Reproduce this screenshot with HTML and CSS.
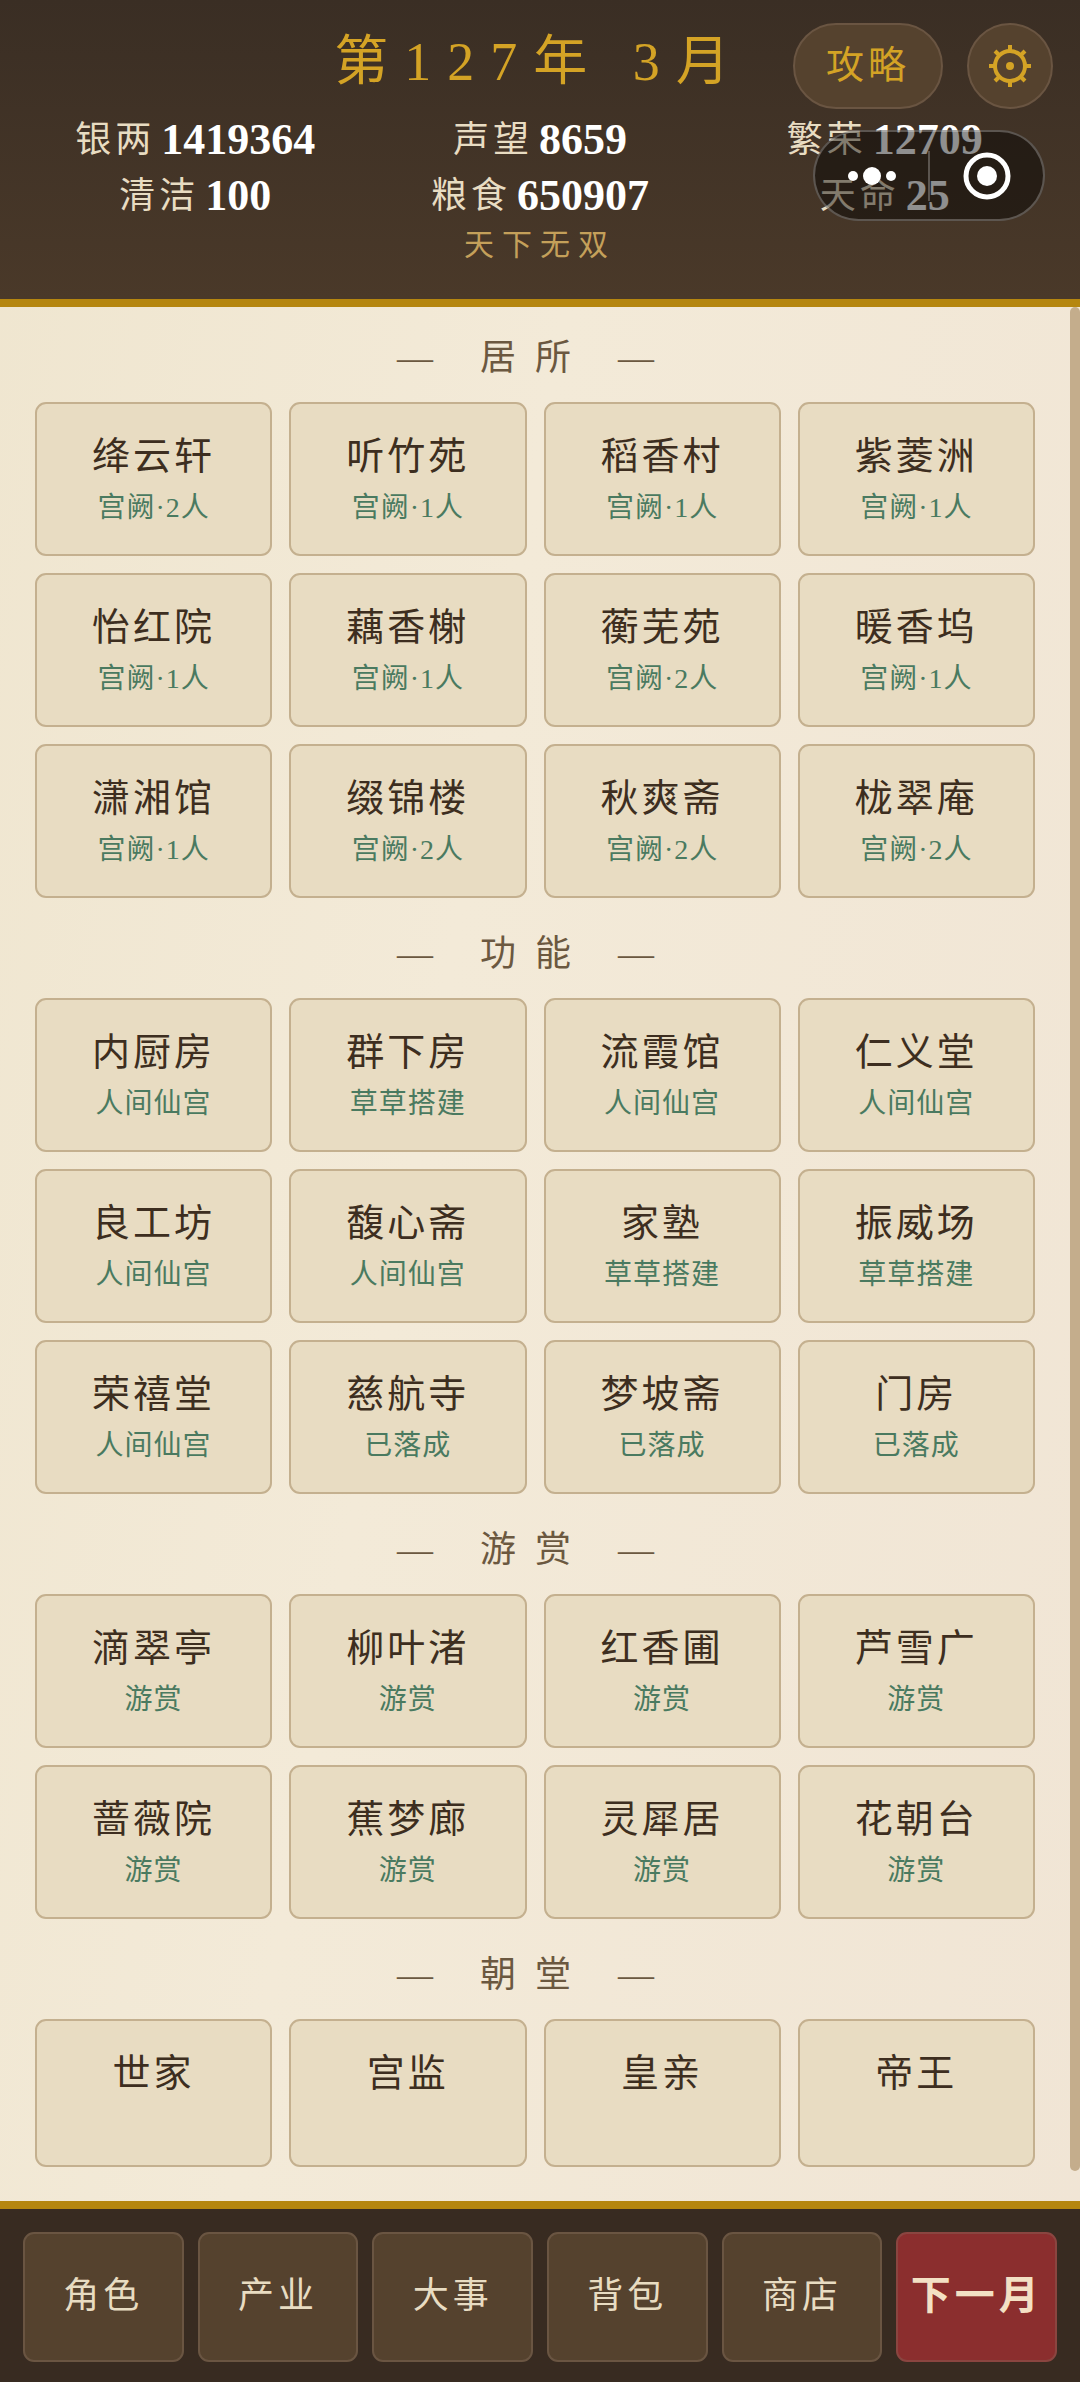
FILE: index.html
```
<!DOCTYPE html>
<html lang="zh-CN">
<head>
    <meta charset="UTF-8">
    <meta name="viewport" content="width=device-width, initial-scale=1.0">
    <title>第127年 3月</title>
    <link rel="stylesheet" href="styles.css">
</head>
<body>
    <!-- Header -->
    <header class="header">
        <div class="header-top">
            <h1 class="date">第127年 3月</h1>
            <div class="header-actions">
                <button class="btn-guide" type="button">攻略</button>
                <button class="btn-settings" type="button" aria-label="设置">
                    <svg width="42" height="42" viewBox="0 0 42 42" fill="none" stroke="currentColor" stroke-width="4">
                        <circle cx="21" cy="21" r="15"/>
                        <circle cx="21" cy="21" r="4" fill="currentColor" stroke="none"/>
                        <path d="M21 0v5M21 37v5M0 21h5M37 21h5M6 6l4 4M32 32l4 4M6 36l4-4M32 10l4-4"/>
                    </svg>
                </button>
            </div>
        </div>
        <div class="stats">
            <div class="stat">银两<strong>1419364</strong></div>
            <div class="stat">声望<strong>8659</strong></div>
            <div class="stat">繁荣<strong>12709</strong></div>
            <div class="stat">清洁<strong>100</strong></div>
            <div class="stat">粮食<strong>650907</strong></div>
            <div class="stat">天命<strong>25</strong></div>
        </div>
        <p class="rank">天下无双</p>

        <!-- Mini program menu, floats over the stats -->
        <div class="capsule">
            <button type="button" aria-label="更多">
                <svg width="50" height="50" viewBox="0 0 50 50" fill="currentColor">
                    <circle cx="6" cy="25" r="5"/>
                    <circle cx="25" cy="25" r="9"/>
                    <circle cx="44" cy="25" r="5"/>
                </svg>
            </button>
            <button type="button" aria-label="关闭">
                <svg width="50" height="50" viewBox="0 0 50 50">
                    <circle cx="25" cy="25" r="21" fill="none" stroke="currentColor" stroke-width="5"/>
                    <circle cx="25" cy="25" r="10" fill="currentColor"/>
                </svg>
            </button>
        </div>
    </header>

    <!-- Buildings -->
    <main class="main">
        <div class="content">
            <section class="section">
                <h2>— 居所 —</h2>
                <div class="grid">
                    <button class="card" type="button"><span class="name">绛云轩</span><span class="info">宫阙·2人</span></button>
                    <button class="card" type="button"><span class="name">听竹苑</span><span class="info">宫阙·1人</span></button>
                    <button class="card" type="button"><span class="name">稻香村</span><span class="info">宫阙·1人</span></button>
                    <button class="card" type="button"><span class="name">紫菱洲</span><span class="info">宫阙·1人</span></button>
                    <button class="card" type="button"><span class="name">怡红院</span><span class="info">宫阙·1人</span></button>
                    <button class="card" type="button"><span class="name">藕香榭</span><span class="info">宫阙·1人</span></button>
                    <button class="card" type="button"><span class="name">蘅芜苑</span><span class="info">宫阙·2人</span></button>
                    <button class="card" type="button"><span class="name">暖香坞</span><span class="info">宫阙·1人</span></button>
                    <button class="card" type="button"><span class="name">潇湘馆</span><span class="info">宫阙·1人</span></button>
                    <button class="card" type="button"><span class="name">缀锦楼</span><span class="info">宫阙·2人</span></button>
                    <button class="card" type="button"><span class="name">秋爽斋</span><span class="info">宫阙·2人</span></button>
                    <button class="card" type="button"><span class="name">栊翠庵</span><span class="info">宫阙·2人</span></button>
                </div>
            </section>

            <section class="section">
                <h2>— 功能 —</h2>
                <div class="grid">
                    <button class="card" type="button"><span class="name">内厨房</span><span class="info">人间仙宫</span></button>
                    <button class="card" type="button"><span class="name">群下房</span><span class="info">草草搭建</span></button>
                    <button class="card" type="button"><span class="name">流霞馆</span><span class="info">人间仙宫</span></button>
                    <button class="card" type="button"><span class="name">仁义堂</span><span class="info">人间仙宫</span></button>
                    <button class="card" type="button"><span class="name">良工坊</span><span class="info">人间仙宫</span></button>
                    <button class="card" type="button"><span class="name">馥心斋</span><span class="info">人间仙宫</span></button>
                    <button class="card" type="button"><span class="name">家塾</span><span class="info">草草搭建</span></button>
                    <button class="card" type="button"><span class="name">振威场</span><span class="info">草草搭建</span></button>
                    <button class="card" type="button"><span class="name">荣禧堂</span><span class="info">人间仙宫</span></button>
                    <button class="card" type="button"><span class="name">慈航寺</span><span class="info">已落成</span></button>
                    <button class="card" type="button"><span class="name">梦坡斋</span><span class="info">已落成</span></button>
                    <button class="card" type="button"><span class="name">门房</span><span class="info">已落成</span></button>
                </div>
            </section>

            <section class="section">
                <h2>— 游赏 —</h2>
                <div class="grid">
                    <button class="card" type="button"><span class="name">滴翠亭</span><span class="info">游赏</span></button>
                    <button class="card" type="button"><span class="name">柳叶渚</span><span class="info">游赏</span></button>
                    <button class="card" type="button"><span class="name">红香圃</span><span class="info">游赏</span></button>
                    <button class="card" type="button"><span class="name">芦雪广</span><span class="info">游赏</span></button>
                    <button class="card" type="button"><span class="name">蔷薇院</span><span class="info">游赏</span></button>
                    <button class="card" type="button"><span class="name">蕉梦廊</span><span class="info">游赏</span></button>
                    <button class="card" type="button"><span class="name">灵犀居</span><span class="info">游赏</span></button>
                    <button class="card" type="button"><span class="name">花朝台</span><span class="info">游赏</span></button>
                </div>
            </section>

            <section class="section">
                <h2>— 朝堂 —</h2>
                <div class="grid">
                    <button class="card" type="button"><span class="name">世家</span></button>
                    <button class="card" type="button"><span class="name">宫监</span></button>
                    <button class="card" type="button"><span class="name">皇亲</span></button>
                    <button class="card" type="button"><span class="name">帝王</span></button>
                </div>
            </section>
        </div>
        <div class="scroll-track"><div class="scroll-thumb"></div></div>
    </main>

    <!-- Bottom bar -->
    <nav class="footer">
        <button type="button">角色</button>
        <button type="button">产业</button>
        <button type="button">大事</button>
        <button type="button">背包</button>
        <button type="button">商店</button>
        <button class="next-month" type="button">下一月</button>
    </nav>
</body>
</html>
```
FILE: styles.css
```
* {
    box-sizing: border-box;
}
body {
    margin: 0;
    min-height: 100vh;
    display: flex;
    flex-direction: column;
    font-family: "Liberation Serif", "Noto Sans CJK SC", serif;
    background-color: #f3ead8;
    color: #3d2e20;
}
button {
    margin: 0;
    padding: 0;
    font-family: inherit;
    color: inherit;
    cursor: pointer;
}
svg {
    display: block;
}

/* Header */
.header {
    position: relative;
    padding: 23px 23px 33px;
    background: linear-gradient(#3a2e24, #4a3929);
    border-bottom: 8px solid #b5860f;
}
.header-top {
    display: grid;
    grid-template-columns: 1fr auto 1fr;
    height: 86px;
}
.date {
    grid-column: 2;
    margin: 0;
    font-size: 54px;
    font-weight: normal;
    line-height: 78px;
    letter-spacing: 16px;
    color: #d4a325;
}
.header-actions {
    display: flex;
    justify-content: flex-end;
    gap: 24px;
    padding-right: 4px;
}
.header-actions button {
    height: 86px;
    border: 2px solid #6a5542;
    border-radius: 43px;
    background-color: #55422e;
    color: #d4a325;
}
.header-actions .btn-guide {
    width: 150px;
    padding-bottom: 10px;
    font-size: 38px;
    letter-spacing: 4px;
}
.header-actions .btn-settings {
    display: flex;
    align-items: center;
    justify-content: center;
    width: 86px;
}
.stats {
    display: grid;
    grid-template-columns: repeat(3, 1fr);
    margin-top: 3px;
}
.stat {
    display: flex;
    align-items: center;
    justify-content: center;
    gap: 6px;
    font-size: 36px;
    line-height: 56px;
    letter-spacing: 4px;
    color: #e8dcc2;
}
.stat strong {
    font-size: 44px;
    letter-spacing: 0;
    color: #fff;
}
.rank {
    margin: 0;
    font-size: 30px;
    line-height: 42px;
    letter-spacing: 8px;
    text-align: center;
    color: #c4a05a;
}
.capsule {
    position: absolute;
    top: 130px;
    right: 35px;
    display: flex;
    align-items: center;
    width: 232px;
    height: 91px;
    border: 2px solid rgba(255, 255, 255, 0.25);
    border-radius: 46px;
    background-color: rgba(0, 0, 0, 0.44);
}
.capsule button {
    flex: 1;
    display: flex;
    align-items: center;
    justify-content: center;
    height: 50px;
    border: none;
    background: none;
    color: #fff;
}
.capsule button + button {
    border-left: 2px solid rgba(255, 255, 255, 0.25);
}

/* Buildings */
.main {
    flex: 1;
    display: flex;
    background: linear-gradient(100deg, rgba(236, 226, 200, 0.5), rgba(245, 237, 220, 0) 40%, rgba(238, 224, 210, 0.5));
}
.content {
    flex: 1;
    padding: 23px 35px 34px;
}
.section + .section {
    margin-top: 28px;
}
.section h2 {
    margin: 0 0 16px;
    font-size: 36px;
    font-weight: normal;
    line-height: 56px;
    letter-spacing: 19px;
    text-align: center;
    color: #6b5840;
}
.grid {
    display: grid;
    grid-template-columns: repeat(4, 1fr);
    gap: 17px;
}
.card {
    display: flex;
    flex-direction: column;
    align-items: center;
    gap: 4px;
    min-height: 148px;
    padding: 26px 0 24px;
    border: 2px solid #c4b08f;
    border-radius: 11px;
    background-color: #e8dcc2;
}
.name {
    font-size: 38px;
    line-height: 52px;
    letter-spacing: 3px;
}
.info {
    font-size: 28px;
    line-height: 44px;
    letter-spacing: 1px;
    color: #4a7a60;
}
.scroll-track {
    width: 10px;
    padding-bottom: 30px;
}
.scroll-thumb {
    height: 100%;
    border-radius: 5px;
    background-color: #c4ad8c;
}

/* Bottom bar */
.footer {
    display: grid;
    grid-template-columns: repeat(6, 1fr);
    gap: 14px;
    padding: 23px 23px 20px;
    background-color: #382b21;
    border-top: 8px solid #b5860f;
}
.footer button {
    height: 130px;
    padding-bottom: 10px;
    border: 2px solid #6a5542;
    border-radius: 11px;
    background-color: #55422e;
    font-size: 36px;
    letter-spacing: 4px;
    color: #e8dcc2;
}
.footer .next-month {
    border-color: #8a4540;
    background-color: #8b2e2e;
    font-size: 40px;
    font-weight: bold;
    color: #f3e0c4;
}
```
